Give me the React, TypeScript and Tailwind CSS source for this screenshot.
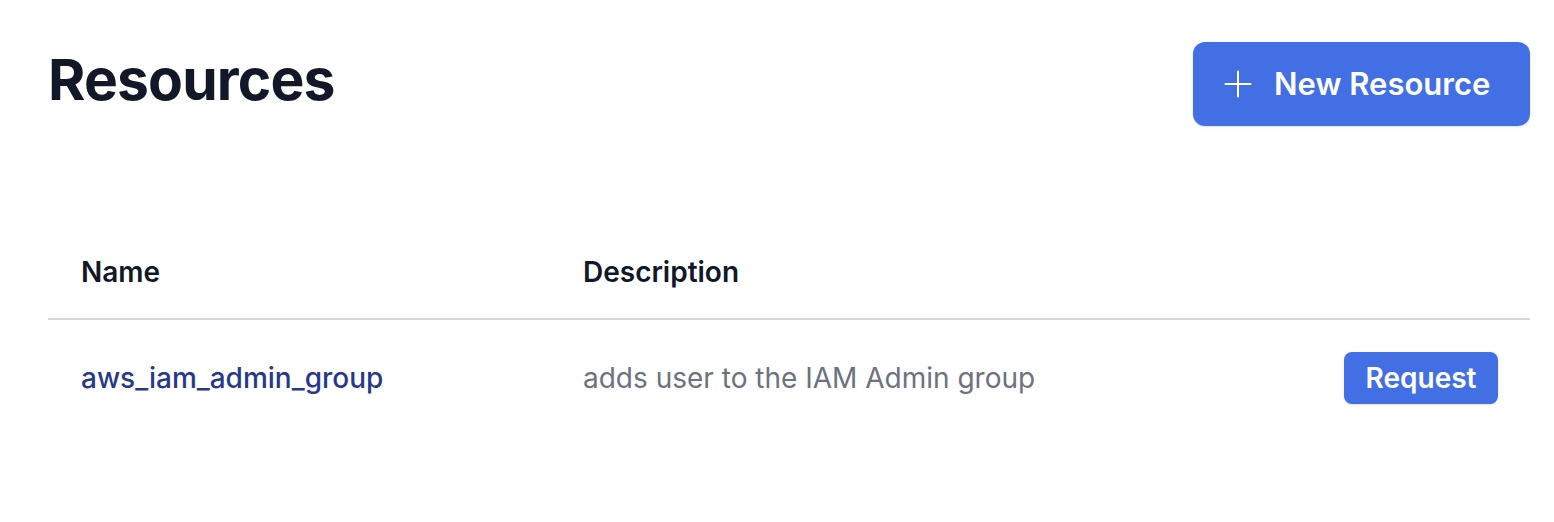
import React from 'react';

const RESOURCES = [
  { name: 'aws_iam_admin_group', description: 'adds user to the IAM Admin group' },
];

const PlusIcon: React.FC = () => (
  <svg width="28" height="28" viewBox="0 0 28 28" fill="none" aria-hidden="true">
    <path d="M14 1.5v25M1.5 14h25" stroke="currentColor" strokeWidth="2" strokeLinecap="round" />
  </svg>
);

const App: React.FC = () => {
  return (
    <div
      className="w-full min-h-[522px] bg-white pl-12 pr-6 pt-[42px]"
      style={{ fontFamily: "Inter, 'Noto Sans', sans-serif" }}
    >
      {/* Header */}
      <div className="flex items-start justify-between">
        <h1 className="mt-[2px] text-[57px] font-bold leading-[72px] tracking-[-0.015em] text-[#111827]">
          Resources
        </h1>
        <button className="flex h-[84px] w-[337px] items-center gap-[22px] rounded-[12px] bg-[#436fe4] pl-[31px] text-white shadow-sm">
          <PlusIcon />
          <span className="text-[31px] font-semibold">New Resource</span>
        </button>
      </div>

      {/* Table */}
      <div className="mt-[128px]">
        <div className="grid grid-cols-[535px_1fr_200px] border-b-2 border-[#d6d8dc] pb-[28px]">
          <div className="pl-[33px] text-[28px] font-semibold leading-[36px] text-[#111827]">Name</div>
          <div className="text-[28px] font-semibold leading-[36px] text-[#111827]">Description</div>
          <div />
        </div>
        {RESOURCES.map((r) => (
          <div key={r.name} className="grid grid-cols-[535px_1fr_200px] items-center pt-[32px] pb-[32px]">
            <div className="pl-[33px] text-[28px] font-medium leading-[36px] text-[#27398a]">{r.name}</div>
            <div className="text-[28px] leading-[36px] text-[#6b7280]">{r.description}</div>
            <div className="flex justify-end pr-[32px]">
              <button className="h-[52px] w-[154px] rounded-[8px] bg-[#436fe4] text-[28px] font-semibold text-white shadow-sm">
                Request
              </button>
            </div>
          </div>
        ))}
      </div>
    </div>
  );
};

export default App;
